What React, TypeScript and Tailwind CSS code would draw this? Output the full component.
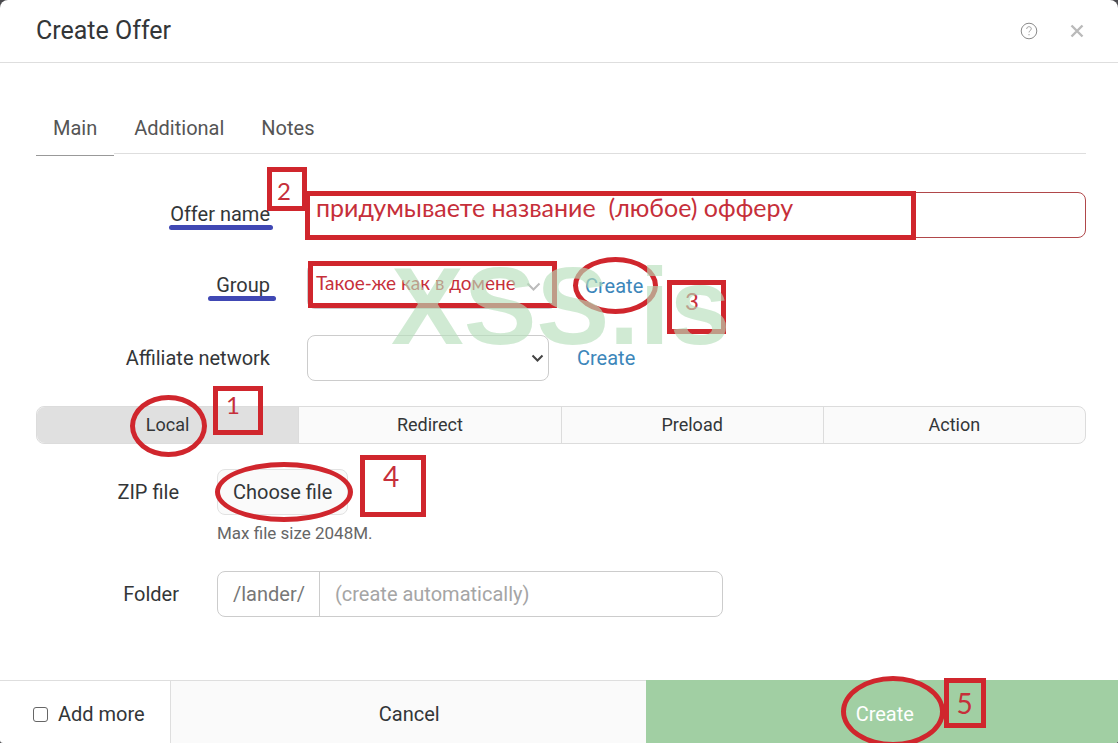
import { useState } from 'react';
import type { ReactNode } from 'react';

const tabs = ['Main', 'Additional', 'Notes'];
const offerTypes = ['Local', 'Redirect', 'Preload', 'Action'];

interface MarkProps {
  className: string;
  children?: ReactNode;
}

// Red rectangle with an optional note inside
function MarkBox({ className, children }: MarkProps) {
  return (
    <div
      className={`pointer-events-none absolute z-10 whitespace-pre border-5 border-[#d0262d] text-left font-[Lato,'Open_Sans',sans-serif] text-[#c62f3a] ${className}`}
    >
      {children}
    </div>
  );
}

function MarkEllipse({ className }: MarkProps) {
  return (
    <div
      className={`pointer-events-none absolute z-10 rounded-[50%] border-5 border-[#d0262d] ${className}`}
    />
  );
}

function MarkUnderline({ className }: MarkProps) {
  return <div className={`pointer-events-none absolute h-[5px] rounded-full bg-[#4048b4] ${className}`} />;
}

function HelpIcon() {
  return (
    <svg width="18" height="18" viewBox="0 0 18 18" fill="none" stroke="#8a8a8a">
      <circle cx="9" cy="9" r="7.8" />
      <path d="M6.7 7c0-1.5 1-2.3 2.3-2.3s2.3.8 2.3 2.1c0 1.8-2.3 1.8-2.3 3.6" strokeWidth="0.8" />
      <path d="M9 12v1.3" strokeWidth="0.8" />
    </svg>
  );
}

function CloseIcon() {
  return (
    <svg width="14" height="14" viewBox="0 0 14 14" fill="none" stroke="#bababa" strokeWidth="2.4">
      <path d="M1.5 1.5l11 11M12.5 1.5l-11 11" />
    </svg>
  );
}

export default function App() {
  const [tab, setTab] = useState('Main');
  const [offerType, setOfferType] = useState('Local');
  const [name, setName] = useState('');
  const [folder, setFolder] = useState('');
  const [addMore, setAddMore] = useState(false);

  return (
    <div className="min-h-screen bg-[#4a4a4e] font-[Roboto,sans-serif] text-xl text-[#333638]">
      <div className="flex min-h-screen flex-col overflow-hidden rounded-t-lg rounded-b-[3px] bg-white">
        <header className="flex h-[63px] items-center justify-between border-b border-[#dedede] pr-[34px] pl-9">
          <h1 className="pb-px text-[25px]">Create Offer</h1>
          <div className="flex items-center gap-8">
            <button type="button" aria-label="Help">
              <HelpIcon />
            </button>
            <button type="button" aria-label="Close">
              <CloseIcon />
            </button>
          </div>
        </header>

        <main className="flex-1 px-8 pt-10 pb-[63px] sm:pl-9">
          <nav className="flex h-[51px] items-start gap-[3px] border-b border-[#dedede] text-[#555]">
            {tabs.map((item) => (
              <button
                key={item}
                type="button"
                onClick={() => setTab(item)}
                className={`px-[17px] pb-[3px] ${tab === item ? 'h-[53px] border-b border-[#999] bg-white' : 'h-[52px]'}`}
              >
                {item}
              </button>
            ))}
          </nav>

          <form className="mt-[38px]" onSubmit={(e) => e.preventDefault()}>
            <div className="relative flex flex-col gap-[25px]">
              <div className="flex items-center gap-[37px]">
                <label htmlFor="name" className="relative w-[234px] shrink-0 pb-[2px] text-right">
                  Offer name
                  <MarkUnderline className="-right-[3px] bottom-0 w-[104px]" />
                </label>
                <div className="relative flex-1">
                  <input
                    id="name"
                    type="text"
                    value={name}
                    onChange={(e) => setName(e.target.value)}
                    className="block h-[46px] w-full rounded-lg border border-[#b0484a] px-4"
                  />
                  <MarkBox className="-top-[25px] -left-10 h-11 w-10 pt-[3px] pl-[5px] text-2xl">2</MarkBox>
                  <MarkBox className="-top-px -left-[2px] h-[49px] w-[611px] pl-[6px] text-[25px] leading-[23px]">
                    {'придумываете название  (любое) офферу'}
                  </MarkBox>
                </div>
              </div>

              <div className="flex items-center gap-[37px]">
                <label htmlFor="group" className="relative w-[234px] shrink-0 pb-[2px] text-right">
                  Group
                  <MarkUnderline className="-right-[6px] bottom-0 w-[68px]" />
                </label>
                <div className="flex items-center gap-7">
                  <div className="relative">
                    <select
                      id="group"
                      className="block h-[46px] w-[250px] appearance-none rounded-lg border border-[#ccc] bg-white px-4"
                    >
                      <option></option>
                    </select>
                    <svg className="pointer-events-none absolute top-[19px] right-4" width="15" height="10" viewBox="0 0 15 10" fill="none" stroke="#bbb" strokeWidth="2">
                      <path d="M1.5 1.5l6 6 6-6" />
                    </svg>
                    <MarkBox className="-top-[2px] left-px h-[47px] w-[249px] pl-[3px] text-[19px] leading-[33px]">
                      Такое-же как в домене
                    </MarkBox>
                  </div>
                  <div className="relative">
                    <a href="#group" className="text-[#3c86ba]">Create</a>
                    <MarkEllipse className="-top-[15px] -left-3 h-[57px] w-[85px]" />
                    <MarkBox className="top-2 left-[82px] h-[54px] w-[59px] pl-[13px] text-2xl">3</MarkBox>
                  </div>
                </div>
              </div>

              <div className="mt-px flex items-center gap-[37px]">
                <label htmlFor="network" className="w-[234px] shrink-0 text-right">
                  Affiliate network
                </label>
                <div className="flex items-center gap-7">
                  <div className="relative">
                    <select
                      id="network"
                      className="block h-[46px] w-[242px] appearance-none rounded-lg border border-[#ccc] bg-white px-4"
                    >
                      <option></option>
                    </select>
                    <svg className="pointer-events-none absolute top-[19px] right-[5px]" width="13" height="9" viewBox="0 0 13 9" fill="none" stroke="#444" strokeWidth="2">
                      <path d="M1.5 1.5l5 5 5-5" />
                    </svg>
                  </div>
                  <a href="#network" className="text-[#3c86ba]">Create</a>
                </div>
              </div>

              <div className="pointer-events-none absolute top-[52px] left-[355px] z-20 font-['Liberation_Sans',Arial,sans-serif] text-[109px] leading-[124px] font-bold text-[#b5deba]/64">
                XSS.is
              </div>
            </div>

            <div className="mt-[25px] flex h-[38px] rounded-lg border border-[#dcdcdc] bg-[#fafafa] text-lg">
              {offerTypes.map((item) => (
                <button
                  key={item}
                  type="button"
                  onClick={() => setOfferType(item)}
                  className={`relative flex-1 border-r border-[#dcdcdc] first:rounded-l-lg last:rounded-r-lg last:border-r-0 ${offerType === item ? 'bg-[#e0e0e0]' : ''}`}
                >
                  {item}
                  {item === 'Local' && (
                    <>
                      <MarkEllipse className="-top-3 left-[93px] h-[62px] w-[77px]" />
                      <MarkBox className="-top-[21px] left-44 h-[49px] w-[50px] pl-[8px] text-2xl leading-7">1</MarkBox>
                    </>
                  )}
                </button>
              ))}
            </div>

            <div className="mt-[25px] flex gap-[38px]">
              <span id="zip-label" className="w-[143px] shrink-0 text-right leading-[46px]">
                ZIP file
              </span>
              <div className="relative">
                <button
                  type="button"
                  aria-describedby="zip-label"
                  className="block h-[46px] rounded-lg border border-[#e2e2e2] bg-[#fafafa] px-[15px]"
                >
                  Choose file
                </button>
                <p className="mt-1 text-[17px] leading-7 text-[#666]">Max file size 2048M.</p>
                <MarkEllipse className="-top-[7px] -left-[2px] h-[60px] w-[138px]" />
                <MarkBox className="-top-[14px] left-[143px] h-[62px] w-[66px] pl-[18px] text-[28px] leading-8">4</MarkBox>
              </div>
            </div>

            <div className="mt-6 flex items-center gap-[38px]">
              <label htmlFor="folder" className="w-[143px] shrink-0 text-right">
                Folder
              </label>
              <div className="flex h-[46px] w-full max-w-[506px] rounded-lg border border-[#ccc]">
                <span className="border-r border-[#ccc] pr-[14px] pl-[15px] leading-[44px] text-[#777]">/lander/</span>
                <input
                  id="folder"
                  type="text"
                  placeholder="(create automatically)"
                  value={folder}
                  onChange={(e) => setFolder(e.target.value)}
                  className="min-w-0 flex-1 rounded-r-lg px-[15px] placeholder:text-[#a5a5a5]"
                />
              </div>
            </div>
          </form>
        </main>

        <footer className="flex h-[63px] border-t border-[#dedede]">
          <label className="flex w-[171px] shrink-0 items-center gap-[10px] border-r border-[#dedede] pt-1 pl-[33px]">
            <input
              type="checkbox"
              checked={addMore}
              onChange={(e) => setAddMore(e.target.checked)}
              className="size-[15px] appearance-none rounded-[3px] border border-[#666] bg-white checked:bg-[#3c86ba]"
            />
            Add more
          </label>
          <button type="button" className="flex-1 bg-[#fafafa] pt-1 pl-[2px]">
            Cancel
          </button>
          <button type="submit" className="relative -mt-px flex-1 bg-[#a1cfa3] pt-[5px] text-white">
            <span className="pl-[6px]">Create</span>
            <MarkEllipse className="-top-1 left-[195px] h-[71px] w-[104px]" />
            <MarkBox className="-top-[2px] left-[298px] h-[50px] w-[42px] pl-[8px] text-[28px] leading-10">5</MarkBox>
          </button>
        </footer>
      </div>
    </div>
  );
}
